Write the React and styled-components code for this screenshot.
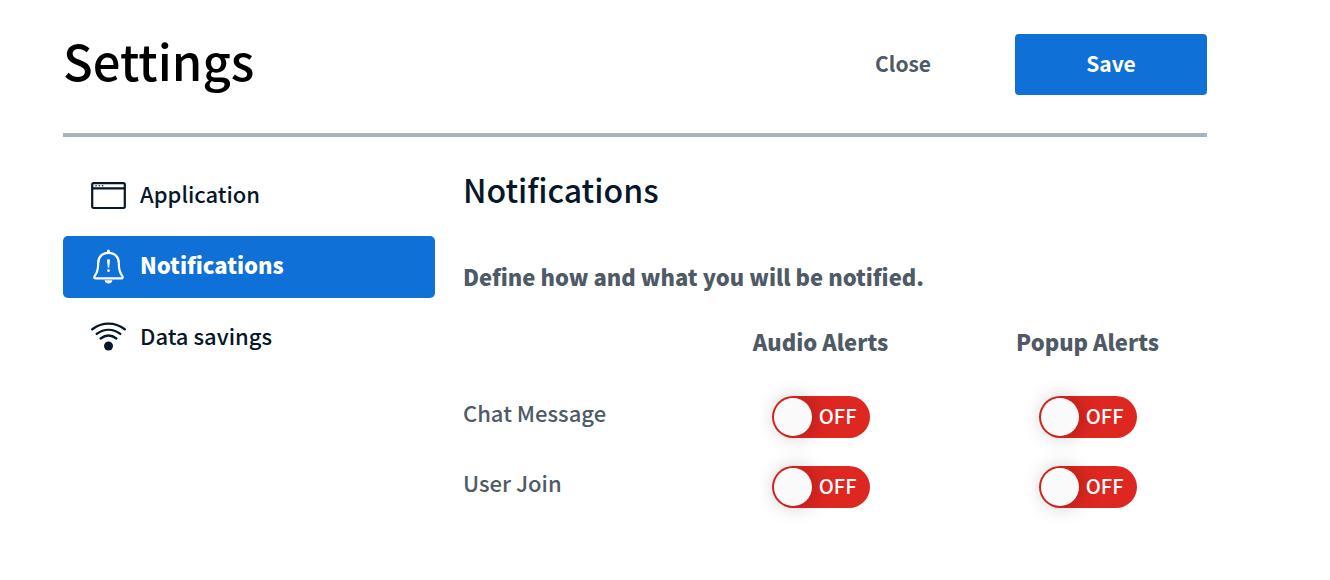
import React, { useState } from "react";
import styled, { createGlobalStyle } from "styled-components";

const GlobalStyle = createGlobalStyle`
  *, *::before, *::after { box-sizing: border-box; }
  body {
    margin: 0;
    background: #ffffff;
    color: #06172a;
    font-family: "Source Sans Pro", "Noto Sans CJK SC", sans-serif;
  }
  button { font-family: inherit; cursor: pointer; }
`;

const Page = styled.main`
  padding: 34px 123px 32px 63px;
`;

const Header = styled.header`
  display: flex;
  align-items: flex-start;
  gap: 16px;
  padding-bottom: 38px;
  border-bottom: 4px solid #a7b3bd;
`;

const Title = styled.h1`
  flex: 1;
  margin: 0;
  font-size: 49px;
  font-weight: 500;
  line-height: 52px;
  color: #000000;
`;

const ActionButton = styled.button`
  width: 192px;
  height: 61px;
  padding: 0 0 4px;
  border: 0;
  border-radius: 4px;
  background: ${(p) => (p.$primary ? "#0f70d7" : "transparent")};
  color: ${(p) => (p.$primary ? "#ffffff" : "#4e5a66")};
  font-size: 21px;
  font-weight: 700;
  line-height: 28px;
`;

const Body = styled.div`
  display: grid;
  grid-template-columns: minmax(0, 1fr) minmax(0, 2fr);
  gap: 28px;
  padding-top: 28px;
`;

const TabList = styled.div`
  display: flex;
  flex-direction: column;
  gap: 9px;
`;

const Tab = styled.button`
  display: flex;
  align-items: center;
  gap: 14px;
  height: 62px;
  padding: 0 28px;
  border: 0;
  border-radius: 5px;
  background: ${(p) => (p.$active ? "#0f70d7" : "transparent")};
  color: ${(p) => (p.$active ? "#ffffff" : "#06172a")};
  font-size: 22px;
  font-weight: ${(p) => (p.$active ? 900 : 500)};
  line-height: 32px;
  text-align: left;
`;

const TabLabel = styled.span`
  padding-bottom: 6px;
`;

const Icon = styled.svg`
  flex: none;
  width: 35px;
  height: 36px;
  fill: none;
  stroke: currentColor;
  stroke-width: 2.2;
  stroke-linecap: round;
  stroke-linejoin: round;
`;

const Panel = styled.section`
  margin-right: -14px;
  color: #4e5a66;
`;

const PanelTitle = styled.h2`
  margin: 0;
  font-size: 32px;
  font-weight: 500;
  line-height: 48px;
  color: #06172a;
`;

const Description = styled.p`
  margin: 47px 0 0;
  font-size: 22px;
  font-weight: 900;
  line-height: 32px;
`;

const AlertTable = styled.table`
  width: 100%;
  margin-top: 33px;
  border-collapse: collapse;
  table-layout: fixed;
`;

const ColumnHead = styled.th`
  width: ${(p) => (p.$alert ? "267px" : "auto")};
  height: 57px;
  padding: 0;
  font-size: 22px;
  font-weight: 900;
  line-height: 32px;
  text-align: center;
  vertical-align: top;
`;

const RowHead = styled.th`
  height: 70px;
  padding: 0 0 10px;
  font-size: 22px;
  font-weight: 500;
  line-height: 32px;
  text-align: left;
`;

const ToggleCell = styled.td`
  height: 70px;
  padding: 0;
  text-align: center;
`;

const Track = styled.label`
  display: inline-flex;
  align-items: center;
  justify-content: space-between;
  flex-direction: ${(p) => (p.$on ? "row-reverse" : "row")};
  width: 98px;
  height: 42px;
  padding: ${(p) => (p.$on ? "0 2px 0 13px" : "0 13px 0 2px")};
  border-radius: 21px;
  background: ${(p) => (p.$on ? "#008081" : "#df2721")};
  color: #ffffff;
  font-size: 20px;
  font-weight: 500;
  line-height: 28px;
  vertical-align: middle;
  cursor: pointer;
`;

const ToggleState = styled.span`
  padding-bottom: 2px;
`;

const Knob = styled.input`
  appearance: none;
  width: 38px;
  height: 38px;
  margin: 0;
  border-radius: 50%;
  background: #fafafa;
  box-shadow: 2px 0 20px 0 rgba(0, 0, 0, 0.25);
  cursor: pointer;
`;

const WindowIcon = () => (
  <Icon viewBox="0 0 35 36" aria-hidden="true">
    <rect x="1.2" y="5.2" width="32.6" height="24.8" rx="1.4" />
    <path d="M1.5 10.4h32" />
    <path d="M5 7.8h.1M8.3 7.8h.1M11.6 7.8h.1" strokeWidth="1.5" />
  </Icon>
);

const BellIcon = () => (
  <Icon viewBox="0 0 35 36" aria-hidden="true">
    <path d="M17.5 3.8C11.4 3.8 7.2 8 7.2 14c0 5.5-.6 8-2 10.6-.8 1.4-1.9 2.4-1.9 3.6 0 .8.4 1.2 1.2 1.2h26c.8 0 1.2-.4 1.2-1.2 0-1.2-1.1-2.2-1.9-3.6-1.4-2.6-2-5.1-2-10.6 0-6-4.2-10.2-10.3-10.2Z" />
    <path d="M17.5 1.9v1.4" strokeWidth="3" />
    <path d="M13.6 31.3h7.8c-.5 2.1-1.9 3.3-3.9 3.3s-3.4-1.2-3.9-3.3Z" fill="currentColor" stroke="none" />
    <path d="M16 11.3c0-1.5 3-1.5 3 0l-.8 7.4h-1.4Z" fill="currentColor" stroke="none" />
    <circle cx="17.5" cy="21.6" r="1.4" fill="currentColor" stroke="none" />
  </Icon>
);

const WifiIcon = () => (
  <Icon viewBox="0 0 35 36" aria-hidden="true">
    <path d="M1.3 9.2c10-7.4 22.4-7.4 32.4 0" strokeWidth="2.4" />
    <path d="M5.7 13.9c7.4-5.4 16.2-5.4 23.6 0" strokeWidth="2.4" />
    <path d="M9.6 18.4c4.9-3.5 10.9-3.5 15.8 0" strokeWidth="2.4" />
    <circle cx="17.5" cy="26" r="4.5" fill="currentColor" stroke="none" />
  </Icon>
);

const TABS = [
  { id: "application", label: "Application", icon: WindowIcon },
  { id: "notifications", label: "Notifications", icon: BellIcon },
  { id: "data", label: "Data savings", icon: WifiIcon },
];

const ALERTS = ["Audio Alerts", "Popup Alerts"];
const EVENTS = ["Chat Message", "User Join"];

function Toggle({ name }) {
  const [on, setOn] = useState(false);
  return (
    <Track $on={on}>
      <Knob
        type="checkbox"
        role="switch"
        aria-label={name}
        checked={on}
        onChange={(e) => setOn(e.target.checked)}
      />
      <ToggleState>{on ? "ON" : "OFF"}</ToggleState>
    </Track>
  );
}

export default function App() {
  const [active, setActive] = useState("notifications");
  return (
    <>
      <GlobalStyle />
      <Page>
        <Header>
          <Title>Settings</Title>
          <ActionButton type="button">Close</ActionButton>
          <ActionButton type="button" $primary>Save</ActionButton>
        </Header>
        <Body>
          <TabList role="tablist" aria-orientation="vertical">
            {TABS.map(({ id, label, icon: TabIcon }) => (
              <Tab
                key={id}
                type="button"
                role="tab"
                aria-selected={active === id}
                $active={active === id}
                onClick={() => setActive(id)}
              >
                <TabIcon />
                <TabLabel>{label}</TabLabel>
              </Tab>
            ))}
          </TabList>
          <Panel role="tabpanel">
            <PanelTitle>Notifications</PanelTitle>
            <Description>Define how and what you will be notified.</Description>
            <AlertTable>
              <thead>
                <tr>
                  <ColumnHead as="td" />
                  {ALERTS.map((alert) => (
                    <ColumnHead key={alert} scope="col" $alert>{alert}</ColumnHead>
                  ))}
                </tr>
              </thead>
              <tbody>
                {EVENTS.map((event) => (
                  <tr key={event}>
                    <RowHead scope="row">{event}</RowHead>
                    {ALERTS.map((alert) => (
                      <ToggleCell key={alert}>
                        <Toggle name={`${event}, ${alert}`} />
                      </ToggleCell>
                    ))}
                  </tr>
                ))}
              </tbody>
            </AlertTable>
          </Panel>
        </Body>
      </Page>
    </>
  );
}
